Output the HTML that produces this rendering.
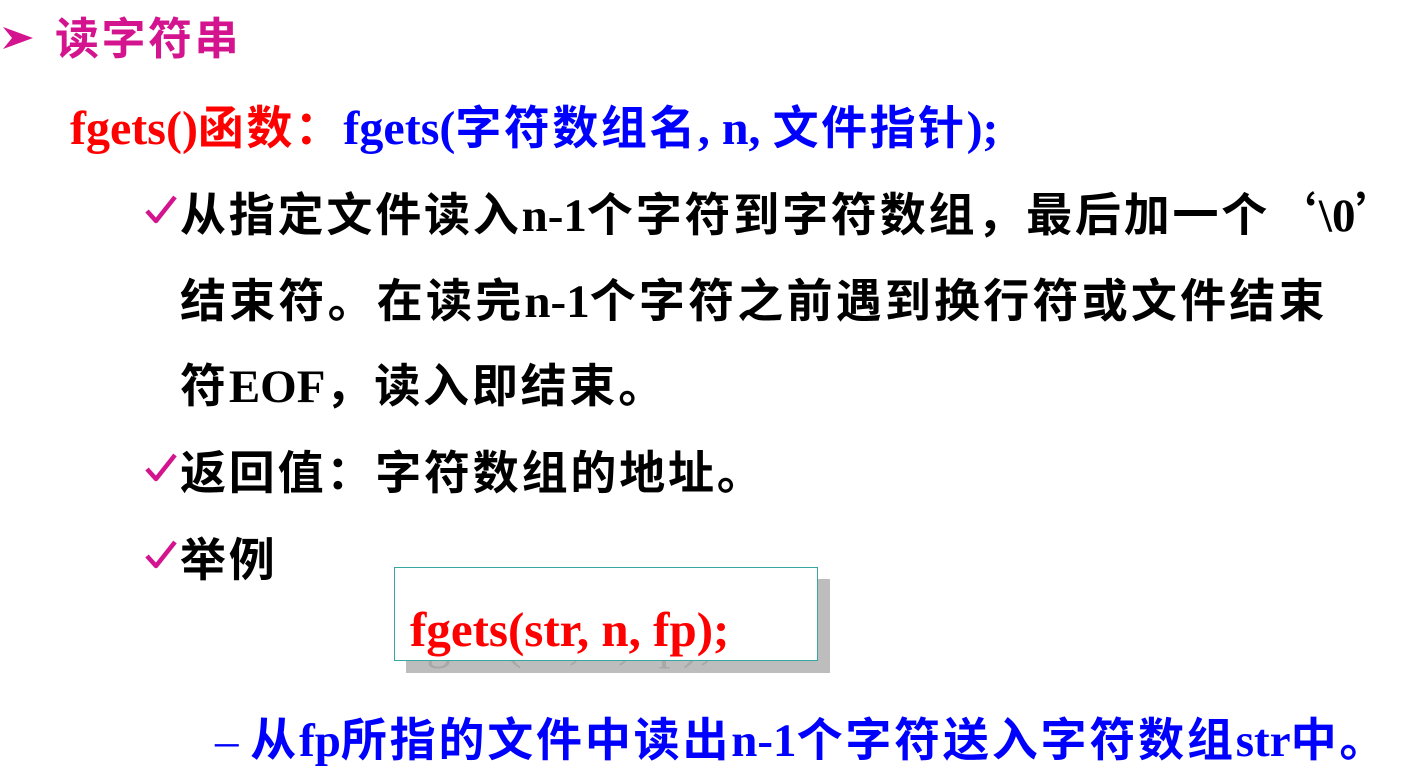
<!DOCTYPE html>
<html><head><meta charset="utf-8"><style>
body{margin:0;width:1405px;height:763px;background:#fff;overflow:hidden;position:relative;font-family:"Liberation Serif","Noto Sans CJK SC",serif;font-weight:bold}
.l{position:absolute;white-space:nowrap;font-size:47px;line-height:60px;letter-spacing:0}
.c{font-family:"Noto Sans CJK SC",sans-serif;font-size:46px;letter-spacing:2.8px}
.k{position:absolute;left:145px;width:32px;height:30px}
.box{position:absolute;left:394px;top:567px;width:422px;height:92px;border:1.5px solid #3aa6a0;background:#fff}
.sh{position:absolute;left:406px;top:579px;width:424px;height:94px;background:#bdbdbd;overflow:hidden}
</style></head><body>
<svg style="position:absolute;left:3px;top:27px" width="30" height="22" viewBox="0 0 30 22"><path d="M0 0 L30 11 L0 22 L9 11 Z" fill="#d4148e"/></svg>
<div class="l" style="left:55px;top:5px;color:#d4148e"><span class="c" style="font-size:44px;letter-spacing:2.5px">读字符串</span></div>
<div class="l" style="left:70px;top:95px;color:#f00;font-size:48px">fgets()<span class="c" style="letter-spacing:2.5px">函数：</span><span style="color:#00f">fgets(<span class="c" style="letter-spacing:2.5px">字符数组名</span>, n, <span class="c" style="letter-spacing:2.5px">文件指针</span>);</span></div>
<svg class="k" style="top:194px" viewBox="0 0 32 30"><path d="M2 17 L11 27 L30 3" fill="none" stroke="#d4148e" stroke-width="4.5" stroke-linejoin="round"/></svg>
<div class="l" style="left:180px;top:182px"><span class="c">从指定文件读入</span>n-1<span class="c">个字符到字符数组，最后加一个‘</span>\0<span class="c">’</span></div>
<div class="l" style="left:180px;top:268px"><span class="c" style="letter-spacing:3.2px">结束符。在读完</span>n-1<span class="c" style="letter-spacing:3.2px">个字符之前遇到换行符或文件结束</span></div>
<div class="l" style="left:180px;top:353px"><span class="c">符</span>EOF<span class="c">，读入即结束。</span></div>
<svg class="k" style="top:452px" viewBox="0 0 32 30"><path d="M2 17 L11 27 L30 3" fill="none" stroke="#d4148e" stroke-width="4.5" stroke-linejoin="round"/></svg>
<div class="l" style="left:180px;top:440px"><span class="c">返回值：字符数组的地址。</span></div>
<svg class="k" style="top:539px" viewBox="0 0 32 30"><path d="M2 17 L11 27 L30 3" fill="none" stroke="#d4148e" stroke-width="4.5" stroke-linejoin="round"/></svg>
<div class="l" style="left:180px;top:527px"><span class="c">举例</span></div>
<div class="sh"><div class="l" style="left:4px;top:33px;color:#a8a8a8;font-weight:normal;font-size:49px">fgets(str, n, fp);</div></div>
<div class="box"></div>
<div class="l" style="left:410px;top:600px;color:#f00;font-size:49px">fgets(str, n, fp);</div>
<div class="l" style="left:215px;top:707px;color:#00f"><span style="font-weight:normal">–</span> <span class="c">从</span>fp<span class="c">所指的文件中读出</span>n-1<span class="c">个字符送入字符数组</span>str<span class="c">中。</span></div>
</body></html>
